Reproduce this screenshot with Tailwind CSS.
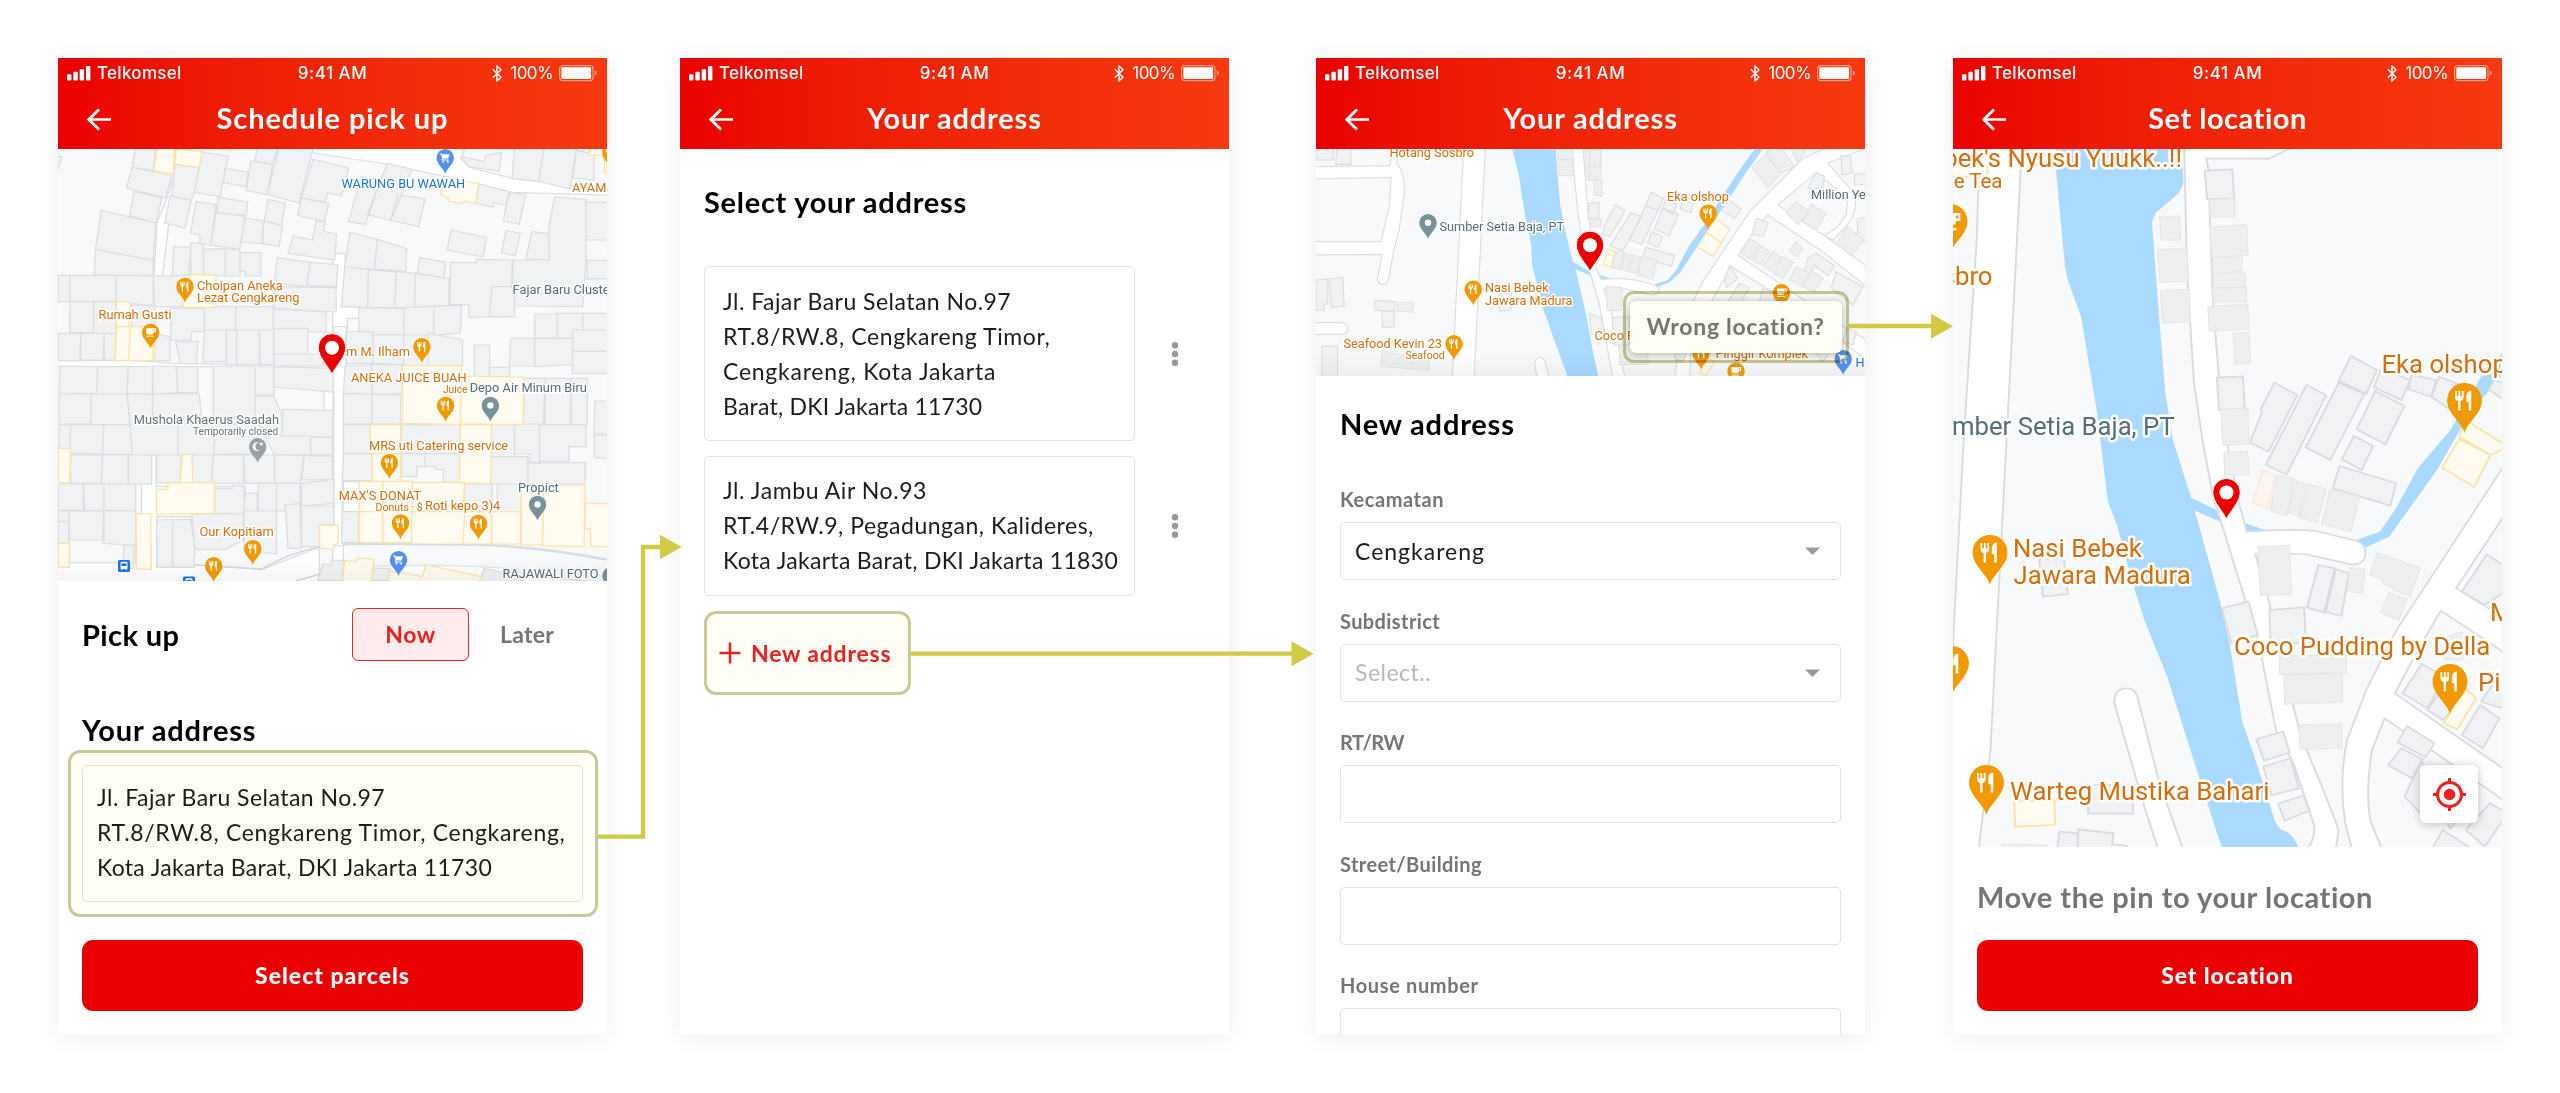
<!DOCTYPE html>
<html lang="en">
<head>
<meta charset="utf-8">
<title>Pick up address flow</title>
<script src="https://cdn.jsdelivr.net/npm/@tailwindcss/browser@4"></script>
</head>
<body class="bg-white">
<!-- Shared icons -->
<svg class="absolute h-0 w-0" aria-hidden="true">
  <defs>
    <path id="drop" d="M0 0C-.9-5-8.7-9.600-8.700-16.300A8.700 8.700 0 0 1 8.700-16.300C8.700-9.600 .9-5 0 0Z"/>
    <g id="food"><use href="#drop" fill="#f29900"/><path d="M-4.300-21v3.200M-2.600-21v3.200M-.9-21v3.200" stroke="#fff" stroke-width=".9" fill="none"/><path d="M-4.750-18.400H-.45Q-.45-16.200-2-16V-11.300H-3.200V-16Q-4.750-16.200-4.750-18.400ZM3.400-21.200V-11.300H2.100V-15.400H.9V-18.500Q1.200-21 3.400-21.200Z" fill="#fff"/></g>
    <g id="cafe"><use href="#drop" fill="#f29900"/><path d="M-4.500-20.500H5.200V-16.500H3Q2.800-14.300 1-14.300H-2.500Q-4.500-14.300-4.500-16.500ZM3-19.300V-17.700H4.100V-19.300ZM-4.500-13H3.200V-11.900H-4.500Z" fill="#fff" fill-rule="evenodd"/></g>
    <g id="shop"><use href="#drop" fill="#5491f5"/><path d="M-5.500-20.800H-3.600L-3.200-19.800H4.600L2.900-15.600H-1.800L-2.400-14.600H3.500V-13.500H-3.400Q-4.300-14.200-2.900-15.900L-4.400-19.700H-5.500Z" fill="#fff"/><circle cx="-2" cy="-12.200" r="1" fill="#fff"/><circle cx="2.700" cy="-12.200" r="1" fill="#fff"/></g>
    <g id="place"><use href="#drop" fill="#78909c"/><circle cy="-16.300" r="3.200" fill="#fff"/></g>
    <g id="mosque"><use href="#drop" fill="#9aa0a6"/><path d="M1.600-12.800A4.300 4.300 0 1 1 1.300-20.200A3.600 3.600 0 1 0 1.600-12.800Z" fill="#fff"/><path d="M3.500-21l.6 1.300 1.400.1-1 1 .3 1.400-1.300-.7-1.200.7.200-1.400-1-1 1.400-.1Z" fill="#fff"/></g>
    <g id="bus"><rect width="12" height="12" rx="1.600" fill="#1a73e8"/><path d="M2.500 3Q2.500 1.800 4 1.800H8Q9.500 1.800 9.500 3V9H8.700V10.300H7.500V9H4.500V10.300H3.300V9H2.500Z" fill="#fff"/><path d="M3.500 3.400H8.500V6H3.500Z" fill="#1a73e8"/></g>
    <g id="pin"><path d="M0 .3C-2.600-6.500-13.800-16.500-13.800-26.600A13.800 13.800 0 0 1 13.800-26.600C13.800-16.500 2.600-6.500 0 .3Z" fill="#ea0000" stroke="#fff" stroke-width="1"/><circle cy="-26.300" r="7" fill="#fff"/></g>
    <g id="bars" fill="#fff"><rect y="8.200" width="4.400" height="6.300" rx="1"/><rect x="6.400" y="5.800" width="4.400" height="8.700" rx="1"/><rect x="12.700" y="3.200" width="4.400" height="11.300" rx="1"/><rect x="19" width="4.400" height="14.500" rx="1"/></g>
    <path id="bluetooth" d="M.8 4.300L9 12.200L5 16V1L9 4.800L.8 12.700" fill="none" stroke="#fff" stroke-width="1.400"/>
    <g id="battery"><rect x=".6" y=".6" width="33.400" height="15" rx="3" fill="none" stroke="#fff" stroke-opacity=".5" stroke-width="1.200"/><rect x="2.300" y="2.300" width="29.800" height="11.600" rx="1.200" fill="#fff"/><path d="M35.700 5.500Q38 6.300 38 8.100Q38 9.900 35.700 10.700Z" fill="#fff" fill-opacity=".5"/></g>
    <path id="back" d="M12 1.500L1.800 11.500L12 21.500M1.800 11.500H24" fill="none" stroke="#fff" stroke-width="2.700"/>
  </defs>
</svg>

<main class="relative flex h-[1093px] w-[2560px] overflow-hidden pt-[58px] pl-[58px] font-['Lato',sans-serif]">

  <!-- Screen 1: schedule pick up -->
  <article class="flex h-[976px] w-[549px] flex-col bg-white shadow-[0_3px_24px_rgba(0,0,0,0.07)]">
    <header class="h-[91px] shrink-0 bg-gradient-to-r from-[#ea0000] to-[#f6390f] text-white">
      <div class="grid h-[31px] grid-cols-[1fr_auto_1fr] items-center pr-[9px] pl-[9px] font-['Inter',sans-serif] text-[17px]">
        <div class="flex items-center gap-[6px] font-medium tracking-[0.29px]"><svg class="h-[15px] w-[24px]"><use href="#bars"/></svg>Telkomsel</div>
        <div class="font-medium tracking-[0.55px]">9:41 AM</div>
        <div class="flex items-center justify-end tracking-[-0.6px]"><svg class="mr-[8px] h-[17px] w-[10px]"><use href="#bluetooth"/></svg>100%<svg class="ml-[6px] h-[17px] w-[39px]"><use href="#battery"/></svg></div>
      </div>
      <div class="grid h-[60px] grid-cols-[1fr_auto_1fr] items-center pl-[29px] pr-[29px]">
        <svg class="h-[23px] w-[26px]"><use href="#back"/></svg>
        <h1 class="pb-[3px] text-[29px] font-bold tracking-[0.9px]">Schedule pick up</h1>
      </div>
    </header>
    <div class="relative h-[432px] shrink-0 overflow-hidden bg-[#f8f9fb]">
      <svg class="h-[432px] w-[549px] font-['Roboto',sans-serif]" viewBox="0 0 549 432">
        <g transform="translate(-18 -109) scale(.38265 .33333)" fill="#f1f2f4" stroke="#dcdee2" stroke-width="3.500">
          <path fill="#fff" d="M700 320H1112L1100 356L1122 382L1236 416L1500 452V466L1230 457L1060 410L905 372L700 336Z"/>
          <path fill="#fff" d="M352 405L320 708H298L306 548L333 470Z"/>
          <path fill="#fff" d="M765 1700V650Q785 630 798 645V800H835V835H803V900L790 1700Z"/>
          <path d="M250 320L302 326L297 392L241 382ZM241 382L345 405L328 474L226 444ZM246 455L318 474L303 549L234 527ZM160 511L303 549L296 661L145 628ZM145 628L296 661V706H142ZM40 346L58 350L46 388V340Z"/>
          <path d="M424 336L492 348L471 470L403 457ZM353 374L416 383L403 457L395 482L344 467ZM340 467L395 482L379 564L326 549ZM568 325H622L608 372L561 363ZM551 363L608 374L594 464L539 452ZM484 385L544 396L538 440L479 428ZM624 325H714L677 489L594 464Z"/>
          <path d="M714 358L806 384L797 435L787 467L752 458L744 486L683 474ZM683 474L754 490L744 544L673 526ZM466 472L543 486L539 527L461 518ZM408 485L460 493L446 615L418 611V585L393 580ZM460 516L536 530L522 628L446 615ZM536 534L585 543L579 611L526 606ZM585 543L634 558L625 620L581 611ZM596 478L641 490L631 556L586 543Z"/>
          <path d="M722 540L746 548L741 574L775 583L770 660L648 640L662 588L712 600ZM349 620L393 622L395 708H346ZM395 608L427 612V703H389ZM427 628L485 626L484 708L427 703ZM485 626L522 630L523 708H484ZM523 637L577 638V708H536V694H523Z"/>
          <path d="M620 653L706 667L697 740L613 730ZM706 667L778 674L775 740L697 737ZM613 740L774 743V816L610 805ZM810 577L881 598L875 688L796 681ZM881 598L958 625L956 694L875 688ZM796 681L858 688L856 803L788 799ZM858 688L931 696L926 803H856ZM931 694L982 700L978 803H926ZM982 700L1069 716V796L978 803Z"/>
          <path d="M908 370L972 388L917 541L855 524ZM840 410L890 420L850 553L806 545ZM972 470L1006 477L990 560L917 541L934 465ZM992 653L1060 667L1056 713L986 699ZM1074 570L1167 592L1158 651L1064 630ZM1218 571L1255 580L1243 647L1206 638ZM1225 455L1269 466L1252 553L1211 543ZM1147 432L1229 455L1219 496L1187 488L1183 501L1138 490ZM1285 575L1344 583L1331 662L1270 657Z"/>
          <path d="M1345 471L1427 478V662L1418 800L1234 798L1236 660H1331L1330 560ZM1427 487H1500V600H1427ZM1240 325H1317L1303 424L1234 415ZM1317 325H1402L1385 447L1303 424ZM1402 330L1448 345V420L1392 413ZM1104 350L1120 380L1200 393L1206 337L1165 346L1160 365ZM1430 661H1500V715L1430 718ZM1073 667L1140 668V658L1235 660L1229 830L1122 832L1120 794H1071Z"/>
          <path d="M48 706H78V785H48ZM78 706H198V785H78ZM198 706L296 708V795H198ZM296 708H346L395 703L370 800H300ZM78 785H140V878H78ZM140 785H198V900H140ZM240 790L300 800V900H240ZM342 805H430V875L397 874L395 900H342ZM430 800H511V875H430ZM511 800H610V880H511ZM610 807L748 816V876H610ZM833 803L952 806L950 887L833 885ZM952 803L1030 799L1028 887H950ZM1030 799L1102 796L1099 878L1028 887ZM1293 822H1352V894H1293ZM1352 820H1418V894H1352ZM1418 820H1500V900H1418ZM1180 740H1240V830H1175Z"/>
        </g>
        <g transform="translate(-18 181) scale(.38265 .33333)" fill="#f1f2f4" stroke="#dcdee2" stroke-width="3.500">
          <path fill="#fff" d="M40 92H262L345 100L610 104V110H40ZM290 375H303V470H536V486H456V560H305V712L420 705L580 718L730 652V780H40V698H250V550H265V462H290Z"/>
          <path fill="#fff" d="M790 638L1150 642Q1300 648 1500 690V780H660L730 752L742 735L860 710Q1000 700 1210 714L1300 740L1500 760V690Q1300 648 1150 642L790 638V455H835V640L730 655L735 585H768V185L742 183V240L766 245V-10H800V100Z"/>
          <path d="M48 10H106V92H48ZM106 10H168L165 90H105ZM168 10H198V90H168ZM295 10L340 20V92H295ZM355 35H413L408 102L366 100ZM430 0H487V95H425ZM487 0H514V104H487ZM514 0H573V104H514ZM573 0H611V104H575ZM611 -5H700V72H611ZM611 72H740V108H611ZM800 5H870V100H800ZM870 15H950V104L870 100ZM950 15H1015V107H950ZM1015 10L1104 30V107H1015ZM1135 45H1175V140H1135ZM1230 25H1293V108H1227ZM1293 25H1392V104L1293 110ZM1392 64H1500V130H1392ZM1392 0H1500V64H1392Z"/>
          <path d="M52 108L150 110L148 190L50 192ZM150 110H230L228 192H148ZM230 110L294 108L295 192L228 190ZM294 108H356L360 188L294 194ZM356 110H412V188H360ZM50 192H133V282H50ZM133 192H228L235 284H133ZM228 190L294 194V282H235ZM294 192H416L424 284H294ZM453 108H562V260L453 265ZM562 108H611V195H562ZM611 110L768 115L765 186L611 171ZM634 238L765 241L764 322L633 318ZM424 260H562V284H424ZM562 198H611L634 260L633 318L562 290Z"/>
          <path d="M50 284H80L78 375H50ZM80 284H167L163 372L78 370ZM167 284H235L240 372L163 373ZM235 284H361V375H240ZM361 282H460L453 375H361ZM460 284H573L568 372L453 373ZM573 290L633 318H707V378L613 374ZM707 322H764V378H707ZM80 375H163L160 460H80ZM163 375H231V462H160ZM231 375H292V462H231ZM305 375H369L366 458H305ZM399 375H453L448 460H397ZM453 375H532V460H448ZM532 375H613V460H536ZM613 375H690L680 460H613ZM690 375H764V448L684 450Z"/>
          <path d="M48 462H113V540H48ZM113 462H167V542H117ZM167 462H250V542H167ZM48 543H75V575H48ZM75 543H167V630H77ZM167 543H250V647L163 640ZM220 645H245V715H216ZM48 575H75V640H48ZM456 475H502V467H534V552L456 550ZM536 490H568V543H533ZM570 460H618V543H570ZM305 570L347 568V712H307ZM347 570L394 568L405 657L402 712H347ZM397 552H531V630L484 658H404ZM533 543L618 543V672L533 660ZM641 525L680 520L683 655L648 655ZM618 460H680V520L640 525V543H618ZM683 460L768 448V520L683 528ZM683 528H768V585L740 583L732 650H683Z"/>
          <path d="M797 108L867 104V192L793 190ZM867 104H947V194H867ZM793 192H867V282H793ZM867 192H942V282H867ZM793 284H863V371H793ZM793 371H868V452H790ZM945 284H1098V371H943ZM945 371H1006V410H985V440H945ZM1006 371H1098V460L1054 455V418H1033V410H1006ZM1180 282H1240V380H1178ZM1240 282H1305V400L1281 398V372H1240ZM1305 284H1427V350H1382V393H1305ZM1178 380H1275V462H1178ZM1275 398H1425V462H1275ZM1265 145H1320V282H1263ZM1320 145H1388V284H1316ZM1388 145H1430V284H1386ZM1450 213H1500V313H1448ZM1448 315H1500V384H1448ZM1107 462H1182V542H1110ZM1195 462H1260V545H1195ZM790 545H833V638H788ZM1175 112H1227V140H1175Z"/>
          <path d="M725 752L740 702L762 705V690L795 692L790 752ZM870 715H915V752H862ZM1160 715L1260 740V760H1150Z"/>
        </g>
        <g fill="#fffbf1" stroke="#fde3a7" stroke-width="3.500">
          <path transform="translate(-18 -109) scale(.38265 .33333)" d="M306 325H352L348 404L297 392ZM356 325L424 336L416 383L352 373ZM460 325L498 333 500 325ZM1056 408L1147 432L1138 490L1108 484L1104 491L1067 484V472L1047 465ZM391 703L460 706V802H372L374 760H391ZM200 784L235 786L232 868L270 870L300 900V960H196ZM1436 326H1482V400H1475V345L1436 346Z"/>
          <path transform="translate(-18 181) scale(.38265 .33333)" d="M200 -10H236L232 92H196ZM236 -10H298L294 92H232ZM947 106L1102 108L1099 284L947 280ZM1102 138L1265 142L1263 284H1099ZM863 284H943V371H863ZM868 371H943V454H868ZM1098 282H1180L1178 462L1096 458ZM834 454H896V545H834ZM896 454H973V545H896ZM973 457H1110L1104 545H973ZM834 545H896V638H834ZM896 545H971V638H896ZM971 545H1110L1105 642H971ZM1110 545H1180V642H1105ZM1180 545H1258V642H1180ZM1258 468L1317 462L1313 645L1256 645ZM1317 465H1425L1422 650L1313 647ZM1425 520H1500V650H1440L1438 596H1424ZM304 478H334V458H456V550L304 553ZM372 373H397L399 458H366ZM251 551H289L291 718L252 716ZM48 355H80L78 458H48ZM48 640H77V712H48ZM731 585L780 587L779 642L768 644V658L731 654ZM796 692L827 695L830 683L873 688L866 760H790ZM914 722L1000 740L1008 704L1155 740L1150 760H908Z"/>
        </g>
        <path fill="none" stroke="#d5d8df" stroke-width="1.500" d="M137 416L204 420Q230 404 262 398M284 395L420 396Q480 398 549 411M238 432L262 425"/>
        <g class="fill-[#d56e0c] text-[12.8px]" stroke="#fff" stroke-width="3" stroke-linejoin="round" paint-order="stroke">
          <text x="283.500" y="39" class="fill-[#1a73e8]">WARUNG BU WAWAH</text>
          <text x="514" y="42.700">AYAM GEPREK</text>
          <text x="139" y="140.500">Choipan Aneka</text><text x="139" y="153">Lezat Cengkareng</text>
          <text x="40.500" y="170.300">Rumah Gusti</text>
          <text x="454.600" y="145" class="fill-[#546e7a]">Fajar Baru Cluster</text>
          <text x="288" y="207.300">m M. Ilham</text>
          <text x="293" y="233.300">ANEKA JUICE BUAH</text><text x="385" y="243.700" class="text-[10.200px]">Juice</text>
          <text x="411.700" y="243.300" class="fill-[#546e7a]">Depo Air Minum Biru</text>
          <text x="75.800" y="275" class="fill-[#6a7378]">Mushola Khaerus Saadah</text><text x="135" y="285.800" class="fill-[#6a7378] text-[10.100px]">Temporarily closed</text>
          <text x="311" y="300.700">MRS uti Catering service</text>
          <text x="280.800" y="350.700">MAX'S DONAT</text><text x="317.600" y="361.500" class="text-[10.500px]">Donuts · $</text><text x="367" y="361.300">Roti kepo 3)4</text>
          <text x="460" y="342.700" class="fill-[#546e7a]">Propict</text>
          <text x="141.500" y="387">Our Kopitiam</text>
          <text x="444.600" y="429.300" class="fill-[#546e7a]">RAJAWALI FOTO</text>
        </g>
        <use href="#shop" x="387.200" y="25"/><use href="#food" x="553" y="20"/><use href="#food" x="127" y="153.700"/><use href="#cafe" x="92.600" y="199.700"/>
        <use href="#food" x="363.900" y="214"/><use href="#food" x="387.600" y="272.700"/><use href="#place" x="432.400" y="272.700"/><use href="#mosque" x="199.700" y="314"/>
        <use href="#food" x="331.400" y="330"/><use href="#food" x="342.500" y="390.300"/><use href="#food" x="420.500" y="390.700"/><use href="#place" x="479.500" y="371.700"/>
        <use href="#food" x="194.800" y="416"/><use href="#food" x="155.700" y="433"/><use href="#shop" x="340.500" y="427"/><use href="#place" x="553" y="443"/>
        <use href="#bus" x="60" y="411"/><use href="#bus" x="125" y="427.500"/>
        <use href="#pin" x="274" y="225"/>
      </svg>
      <div class="absolute inset-x-0 bottom-0 h-6 bg-gradient-to-t from-black/4 to-transparent"></div>
    </div>
    <section class="px-[24px] pt-[27px]">
      <div class="flex h-[53px] items-center">
        <h2 class="flex-1 text-[29px] font-bold tracking-[0.4px] text-black">Pick up</h2>
        <span class="flex h-[53px] w-[117px] items-center justify-center rounded-md border border-[#ee2222] bg-[#ffebeb] text-[23px] font-bold tracking-[0.500px] text-[#e8201f]">Now</span>
        <span class="flex h-[53px] w-[114px] items-center justify-center pl-[2px] text-[23px] font-bold tracking-[0.240px] text-[#757575]">Later</span>
      </div>
      <h2 class="mt-[49px] h-[40px] text-[29px] leading-[40px] font-bold tracking-[0.8px] text-black">Your address</h2>
      <div class="relative mt-[15px] h-[137px] rounded-[5px] border border-[#e2e2e2] pt-[14px] pl-[14px] text-[23px] leading-[35.200px] whitespace-nowrap text-[#1c1c1c]">
        <p class="tracking-[0.470px]">Jl. Fajar Baru Selatan No.97</p>
        <p class="tracking-[0.670px]">RT.8/RW.8, Cengkareng Timor, Cengkareng,</p>
        <p class="tracking-[0.310px]">Kota Jakarta Barat, DKI Jakarta 11730</p>
        <div class="absolute -top-[16px] -right-[16px] -bottom-[16px] -left-[15px] rounded-[12px] border-3 border-[#cac89a] bg-[#fffff6] mix-blend-multiply"></div>
      </div>
      <button class="mt-[38px] h-[71px] w-full rounded-[11px] bg-[#ea0000] text-[23px] font-black tracking-[1px] text-white">Select parcels</button>
    </section>
  </article>

  <!-- Screen 2: address list -->
  <article class="ml-[73px] flex h-[976px] w-[549px] flex-col bg-white shadow-[0_3px_24px_rgba(0,0,0,0.07)]">
    <header class="h-[91px] shrink-0 bg-gradient-to-r from-[#ea0000] to-[#f6390f] text-white">
      <div class="grid h-[31px] grid-cols-[1fr_auto_1fr] items-center pr-[9px] pl-[9px] font-['Inter',sans-serif] text-[17px]">
        <div class="flex items-center gap-[6px] font-medium tracking-[0.29px]"><svg class="h-[15px] w-[24px]"><use href="#bars"/></svg>Telkomsel</div>
        <div class="font-medium tracking-[0.55px]">9:41 AM</div>
        <div class="flex items-center justify-end tracking-[-0.6px]"><svg class="mr-[8px] h-[17px] w-[10px]"><use href="#bluetooth"/></svg>100%<svg class="ml-[6px] h-[17px] w-[39px]"><use href="#battery"/></svg></div>
      </div>
      <div class="grid h-[60px] grid-cols-[1fr_auto_1fr] items-center pl-[29px] pr-[29px]">
        <svg class="h-[23px] w-[26px]"><use href="#back"/></svg>
        <h1 class="pb-[3px] text-[29px] font-bold tracking-[0.8px]">Your address</h1>
      </div>
    </header>
    <section class="px-[24px] pt-[33px]">
      <h2 class="h-[40px] text-[29px] leading-[40px] font-bold tracking-[0.720px] text-black">Select your address</h2>
      <div class="mt-[44px] grid grid-cols-[431px_1fr] items-center gap-y-[15px] text-[23px] leading-[35.100px] whitespace-nowrap text-[#1c1c1c]">
        <div class="h-[175px] rounded-[5px] border border-[#e2e2e2] pt-[17px] pl-[18px]">
          <p class="tracking-[0.470px]">Jl. Fajar Baru Selatan No.97</p>
          <p class="tracking-[0.600px]">RT.8/RW.8, Cengkareng Timor,</p>
          <p class="tracking-[0.750px]">Cengkareng, Kota Jakarta</p>
          <p class="tracking-[0.230px]">Barat, DKI Jakarta 11730</p>
        </div>
        <svg class="ml-[36px] h-[26px] w-[8px] fill-[#999]" viewBox="0 0 8 26"><circle cx="4" cy="4.300" r="3.200"/><circle cx="4" cy="13" r="3.200"/><circle cx="4" cy="21.700" r="3.200"/></svg>
        <div class="h-[140px] rounded-[5px] border border-[#e2e2e2] pt-[16px] pl-[18px]">
          <p class="tracking-[0.570px]">Jl. Jambu Air No.93</p>
          <p class="tracking-[0.510px]">RT.4/RW.9, Pegadungan, Kalideres,</p>
          <p class="tracking-[0.310px]">Kota Jakarta Barat, DKI Jakarta 11830</p>
        </div>
        <svg class="ml-[36px] h-[26px] w-[8px] fill-[#999]" viewBox="0 0 8 26"><circle cx="4" cy="4.300" r="3.200"/><circle cx="4" cy="13" r="3.200"/><circle cx="4" cy="21.700" r="3.200"/></svg>
      </div>
      <div class="mt-[15px] flex h-[84px] w-[207px] items-center rounded-[12px] border-3 border-[#cac89a] bg-[#fffff6] pl-[12px] text-[23px] font-bold tracking-[0.800px] text-[#e8201f]">
        <svg class="mr-[10px] h-[22px] w-[22px]" viewBox="0 0 22 22"><path d="M11 .5V21.500M.5 11H21.500" stroke="currentColor" stroke-width="2.500"/></svg>New address
      </div>
    </section>
  </article>

  <!-- Screen 3: new address form -->
  <article class="ml-[87px] flex h-[976px] w-[549px] flex-col overflow-hidden bg-white shadow-[0_3px_24px_rgba(0,0,0,0.07)]">
    <header class="h-[91px] shrink-0 bg-gradient-to-r from-[#ea0000] to-[#f6390f] text-white">
      <div class="grid h-[31px] grid-cols-[1fr_auto_1fr] items-center pr-[9px] pl-[9px] font-['Inter',sans-serif] text-[17px]">
        <div class="flex items-center gap-[6px] font-medium tracking-[0.29px]"><svg class="h-[15px] w-[24px]"><use href="#bars"/></svg>Telkomsel</div>
        <div class="font-medium tracking-[0.55px]">9:41 AM</div>
        <div class="flex items-center justify-end tracking-[-0.6px]"><svg class="mr-[8px] h-[17px] w-[10px]"><use href="#bluetooth"/></svg>100%<svg class="ml-[6px] h-[17px] w-[39px]"><use href="#battery"/></svg></div>
      </div>
      <div class="grid h-[60px] grid-cols-[1fr_auto_1fr] items-center pl-[29px] pr-[29px]">
        <svg class="h-[23px] w-[26px]"><use href="#back"/></svg>
        <h1 class="pb-[3px] text-[29px] font-bold tracking-[0.8px]">Your address</h1>
      </div>
    </header>
    <div class="relative h-[227px] shrink-0 overflow-hidden bg-[#f8f9fb]">
      <svg class="h-[227px] w-[549px] font-['Roboto',sans-serif]" viewBox="-.5 0 549 227">
        <g transform="translate(-7 -4) scale(.33333)" fill="#f1f2f4" stroke="#dcdee2" stroke-width="3.500">
          <path fill="#aadaff" stroke="none" d="M605 0H738L745 100L752 180L770 270L790 350L845 382V392L798 373L830 510L850 620L868 700H776L700 490L668 360L665 300L645 200L627 85Z"/>
          <path fill="#fff" d="M463 0L428 700H494L528 0Z"/>
          <path fill="#fff" d="M0 65L240 62L250 20H268L262 55Q285 80 285 140L268 260L252 320L238 400Q235 420 218 418Q202 415 205 395L218 328L0 330V290L215 290L240 180L245 97L0 102Z"/>
          <path fill="#fff" d="M0 533H95Q115 535 115 550Q115 568 95 568H0ZM683 700L675 655Q680 635 695 637Q705 640 708 655L720 700Z"/>
          <path d="M20 0H72V45H20ZM82 0H124V58H79ZM20 405L55 402V476L44 478V495H20ZM60 402L100 397L104 484L65 488ZM197 466L256 470L254 500L194 495ZM217 498H254V546L219 548ZM37 604H84V700H38ZM568 445H605V495L570 499ZM20 10V48"/>
          <path fill="#eef0f0" stroke="#e4e6e6" d="M263 471L312 474L310 502L261 498ZM218 618L360 644L358 676L214 664ZM745 -10H800V45H745ZM745 42H790V92H748ZM815 60H870V105H818ZM812 -10H875V60H815Z"/>
        </g>
        <g transform="translate(273 -4) scale(.33333)" fill="#f1f2f4" stroke="#dcdee2" stroke-width="3.500">
          <path fill="#aadaff" stroke="none" d="M30 390L60 400L35 405ZM195 418L235 405L260 375L300 300L340 245L440 90L500 5H525L465 90L360 250L320 310L270 385L240 412L205 426Z"/>
          <path fill="#fff" d="M-52 0L-45 100L-35 200L-20 300L0 375L30 480L70 700H107L65 500L42 433L110 432L185 450Q210 450 208 432Q205 420 140 405L90 400L35 403L20 370L-5 200L-20 0Z"/>
          <path fill="#fff" d="M730 0L640 40L590 90L480 200L340 410L280 530L255 700H300L305 600L325 540L425 365L580 460L840 650V590L740 530L445 330L500 250L535 210L700 320L840 432V370L705 272L565 180L680 83L775 160L770 210L745 245L705 272L730 285L760 255Q800 215 798 170L790 140L715 55L840 5V-10Z"/>
          <path d="M77 180L107 196L93 222L60 275L38 266L54 222ZM125 202L155 215L100 318L62 302ZM185 142L222 160L206 197L168 183ZM168 183L206 197L157 298L120 285ZM219 190L266 208L240 272L195 252ZM188 260L219 275L205 308L174 293ZM168 307L255 331L247 364L160 341ZM228 165L262 178L250 208L220 190ZM280 165L310 175L305 203L272 192ZM418 166L455 192L435 221L395 194ZM502 220L536 234L520 275L487 268ZM0 175L28 172V220L-5 222Z"/>
          <path d="M680 82L705 95L700 130L655 130ZM755 32L783 33L788 84L757 90ZM795 88L840 85V118L795 120ZM803 222L840 215V290H806ZM740 380L820 425L790 480L725 430ZM655 338L680 325L735 362L715 392L675 360L660 388L645 380ZM420 362L445 400L412 428L405 405ZM450 415L480 428L450 480L415 470ZM500 500L540 520L560 440L520 430ZM0 505L35 520L45 560L5 570ZM68 518L120 515V600H75ZM262 592L300 600L280 650L255 640ZM690 580L730 610L700 650L665 610ZM770 550L800 560L790 600L760 590Z"/>
          <path fill="#eef0f0" stroke="#e2e5e5" d="M530 28L575 85L535 127L488 66ZM570 0L615 65L575 85L530 20ZM600 0L650 15L625 55ZM0 15H32V65H0ZM0 65H35L33 104H0ZM15 104L37 106L38 154L14 150ZM50 425L98 428L96 496H52ZM620 172L660 200L625 238L589 203ZM665 178L710 205L680 255L640 232ZM775 245L825 285L785 332L741 297ZM480 280L510 300L485 343L455 325ZM515 302L540 320L512 360L490 345ZM550 318L575 338L545 378L520 362ZM580 335L612 352L580 402L552 385ZM620 290L640 312L620 335L600 318ZM620 365L660 385L640 425L600 405ZM665 375L700 400L675 440L640 425ZM155 335L202 345L190 402L145 390ZM130 330L155 338L142 385L118 380ZM105 325L125 330L112 378L95 372ZM80 318L103 322L92 372L68 368ZM0 222H35V245H2ZM90 600H175V658H90Z"/>
          <path fill="#fffbf1" stroke="#fde3a7" d="M380 222L421 252L395 294L350 262ZM352 262L395 294L372 334L323 306ZM355 640L375 650L350 692L330 684ZM55 312L76 318L66 368L42 358Z"/>
        </g>
        <g class="fill-[#d56e0c] text-[12.7px]" stroke="#fff" stroke-width="3" stroke-linejoin="round" paint-order="stroke">
          <text x="73" y="8">Hotang Sosbro</text>
          <text x="123" y="82" class="fill-[#546e7a]">Sumber Setia Baja, PT</text>
          <text x="168.500" y="143">Nasi Bebek</text><text x="168.500" y="155.500">Jawara Madura</text>
          <text x="27" y="199">Seafood Kevin 23</text><text x="89" y="209.500" class="text-[10.500px]">Seafood</text>
          <text x="350.500" y="51.500">Eka olshop</text>
          <text x="494.500" y="49.500" class="fill-[#546e7a]">Million Years</text>
          <text x="278" y="191">Coco Pudding</text>
          <text x="399" y="209">Pinggir Komplek</text>
          <text x="539" y="218" class="fill-[#1a73e8]">Hotel</text>
        </g>
        <use href="#place" x="111.500" y="90"/><use href="#food" x="156.700" y="156.500"/><use href="#food" x="137.500" y="211"/><use href="#food" x="391.700" y="80.500"/>
        <use href="#cafe" x="465" y="160"/><use href="#food" x="384.500" y="220.500"/><use href="#cafe" x="419.500" y="238.500"/><use href="#shop" x="526.700" y="226"/>
        <use href="#pin" x="273.500" y="122.500"/>
      </svg>
      <div class="absolute inset-x-0 bottom-0 h-6 bg-gradient-to-t from-black/4 to-transparent"></div>
      <div class="absolute top-[142px] left-[307px] flex h-[72px] w-[226px] items-center justify-center">
        <span class="flex h-[52px] w-[212px] items-center justify-center rounded-md bg-white pr-[1px] pb-[2px] text-[23px] font-bold tracking-[0.700px] whitespace-nowrap text-[#757575] shadow-[0_1px_8px_rgba(0,0,0,0.3)]">Wrong location?</span>
        <div class="absolute inset-0 rounded-[11px] border-3 border-[#cac89a] bg-[#fffff0]/60 mix-blend-multiply"></div>
      </div>
    </div>
    <section class="px-[24px] pt-[28px]">
      <h2 class="h-[40px] text-[29px] leading-[40px] font-bold tracking-[0.800px] text-black">New address</h2>
      <div class="mt-[43px] flex flex-col gap-[28px] text-[20px] font-bold text-[#757575]">
        <label class="block h-[93.500px]"><span class="block h-[24px] leading-[24px] tracking-[0.550px]">Kecamatan</span>
          <span class="mt-[11px] flex h-[58px] items-center justify-between rounded-[5px] border border-[#e2e2e2] pr-[20px] pl-[14px] text-[23px] font-normal tracking-[1px] text-[#1c1c1c]">Cengkareng<svg class="h-[8px] w-[15px]" viewBox="0 0 15 8"><path d="M0 .5H15L7.500 8Z" fill="#999"/></svg></span></label>
        <label class="block h-[93.500px]"><span class="block h-[24px] leading-[24px] tracking-[0.400px]">Subdistrict</span>
          <span class="mt-[11px] flex h-[58px] items-center justify-between rounded-[5px] border border-[#e2e2e2] pr-[20px] pl-[14px] text-[23px] font-normal tracking-[0.470px] text-[#b8b8b8]">Select..<svg class="h-[8px] w-[15px]" viewBox="0 0 15 8"><path d="M0 .5H15L7.500 8Z" fill="#999"/></svg></span></label>
        <label class="block h-[93.500px]"><span class="block h-[24px] leading-[24px] tracking-[-0.400px]">RT/RW</span>
          <span class="mt-[11px] block h-[58px] rounded-[5px] border border-[#e2e2e2]"></span></label>
        <label class="block h-[93.500px]"><span class="block h-[24px] leading-[24px] tracking-[0.420px]">Street/Building</span>
          <span class="mt-[11px] block h-[58px] rounded-[5px] border border-[#e2e2e2]"></span></label>
        <label class="block h-[93.500px]"><span class="block h-[24px] leading-[24px] tracking-[0.630px]">House number</span>
          <span class="mt-[11px] block h-[58px] rounded-[5px] border border-[#e2e2e2]"></span></label>
      </div>
    </section>
  </article>

  <!-- Screen 4: set location -->
  <article class="ml-[88px] flex h-[976px] w-[549px] flex-col bg-white shadow-[0_3px_24px_rgba(0,0,0,0.07)]">
    <header class="h-[91px] shrink-0 bg-gradient-to-r from-[#ea0000] to-[#f6390f] text-white">
      <div class="grid h-[31px] grid-cols-[1fr_auto_1fr] items-center pr-[9px] pl-[9px] font-['Inter',sans-serif] text-[17px]">
        <div class="flex items-center gap-[6px] font-medium tracking-[0.29px]"><svg class="h-[15px] w-[24px]"><use href="#bars"/></svg>Telkomsel</div>
        <div class="font-medium tracking-[0.55px]">9:41 AM</div>
        <div class="flex items-center justify-end tracking-[-0.6px]"><svg class="mr-[8px] h-[17px] w-[10px]"><use href="#bluetooth"/></svg>100%<svg class="ml-[6px] h-[17px] w-[39px]"><use href="#battery"/></svg></div>
      </div>
      <div class="grid h-[60px] grid-cols-[1fr_auto_1fr] items-center pl-[29px] pr-[29px]">
        <svg class="h-[23px] w-[26px]"><use href="#back"/></svg>
        <h1 class="pb-[3px] text-[29px] font-bold tracking-[0.5px]">Set location</h1>
      </div>
    </header>
    <div class="relative h-[698px] shrink-0 overflow-hidden bg-[#f8f9fb]">
      <svg class="h-[698px] w-[549px] font-['Roboto',sans-serif]" viewBox="0 0 549 698">
        <g transform="translate(-23 -109) scale(.38265 .33333)" fill="#f1f2f4" stroke="#d9dbe0" stroke-width="5">
          <path fill="#aadaff" stroke="none" d="M328 320H658L662 430L650 460L590 518L580 545L600 850L615 1060L635 1200L682 1373L757 1415L765 1448L692 1412L757 1680L783 1810L817 2050L845 2140L890 2300Q905 2370 925 2372Q945 2375 965 2425H763L700 2200L620 1910L560 1740L530 1630L490 1460L465 1385L445 1200L437 1120L415 970L395 830L360 720L353 680L330 400Z"/>
          <path fill="#aadaff" stroke="none" d="M825 1450L875 1470L830 1475ZM1110 1502L1175 1475L1215 1410L1275 1285L1360 1170L1440 1010L1500 935V1000L1440 1080L1385 1170L1325 1290L1275 1370L1200 1490L1135 1524Z"/>
          <path fill="#fff" d="M130 320L122 600L88 1200L62 1770L40 2430H127L158 2130L200 1200L240 320Z"/>
          <path fill="#fff" d="M597 2430L560 2300L482 1990Q480 1945 515 1945Q540 1945 545 1985L600 2230L662 2430Z"/>
          <path fill="#fff" d="M664 310L672 700L680 850L690 1030L712 1200L740 1370L770 1480L825 1685L860 1810L880 1930L905 2075L950 2170L1005 2360Q1005 2400 985 2430H1060L1068 2370L1035 2270L970 2090L920 1870L885 1680L850 1542L980 1542L1100 1573Q1138 1575 1138 1540Q1138 1510 1115 1503L1010 1473Q960 1465 828 1475L805 1380L775 1200L755 1010L740 800L732 560L728 390L722 356H885L960 315Z"/>
          <path fill="#fff" d="M1510 1260L1225 1760L1210 1790L1140 1950L1090 2100Q1068 2220 1085 2350L1104 2430H1182L1150 2340Q1138 2250 1155 2130L1188 2035L1310 2130L1510 2290V2195L1390 2100L1215 1960L1280 1820L1335 1712L1510 1845V1740L1375 1645L1510 1410Z"/>
          <path d="M718 392L790 388L795 475L724 478ZM750 1013L818 1009L822 1105L755 1110ZM900 1028L960 1065L885 1235L836 1208L868 1115L864 1108ZM984 1035L1035 1066L932 1304L878 1275ZM1100 948L1168 990L1140 1062L1068 1022ZM1068 1028L1135 1062L1046 1260L982 1222ZM1164 1053L1240 1098L1190 1213L1115 1168ZM1180 985L1255 1020L1232 1080L1160 1042ZM1258 1005L1323 1020L1310 1070L1250 1048ZM1330 1010L1400 1040L1360 1110L1310 1070ZM1108 1188L1158 1218L1128 1290L1076 1258ZM1070 1278L1218 1330L1203 1397L1053 1345ZM1475 1020L1500 1030V1080L1460 1048Z"/>
          <path d="M1015 1575L1058 1585L1030 1717L985 1703ZM1060 1588L1095 1600L1075 1728L1034 1716ZM887 1710L978 1702L982 1810H890ZM762 1705L832 1685L857 1785L788 1810ZM853 2097L923 2075L940 2138L873 2162ZM871 2180L942 2155L964 2245L892 2266ZM910 2291L977 2266L992 2312L927 2342ZM285 1555H350L360 1662L295 1670ZM415 2235H530V2321L413 2320ZM338 2375L386 2380V2430H332ZM388 2368L480 2380L476 2412L515 2418V2430H386ZM1455 1543L1510 1585V1650L1450 1695L1390 1655ZM1285 1872L1345 1910L1300 2005L1235 1960ZM1330 1960L1380 1990L1340 2040L1300 2010ZM1438 1995L1488 2035L1445 2125L1390 2085ZM1470 1935L1510 1965V2010L1440 1985ZM1247 2058L1318 2110L1295 2152L1222 2107ZM1232 2125L1288 2158L1260 2215L1197 2175ZM1285 2160L1330 2280L1290 2330L1240 2270ZM1463 2290L1510 2320L1450 2420L1400 2370ZM1340 2370L1420 2430H1310ZM1340 2320L1365 2300 1380 2340 1360 2365Z"/>
          <path fill="#eef0ef" stroke="#e5e7e7" stroke-width="3" d="M600 530L652 528L655 600H604ZM594 629L672 625L676 724L601 727ZM602 752L677 748L680 845L607 849ZM730 480L797 475V530L733 532ZM730 562L827 554L831 646L737 652ZM738 652L817 652L815 694L740 692ZM740 698L823 696L825 742H740ZM737 745L827 742V786H740ZM726 800L830 792L833 868L730 874ZM792 880L834 878L838 970L797 973ZM760 1108L830 1105L834 1213L765 1216ZM768 1237L830 1234L833 1304L770 1306ZM905 1305L952 1316L933 1426L890 1413ZM958 1323L986 1333L964 1430L935 1418ZM992 1333L1036 1347L1012 1448L966 1433ZM1045 1348L1123 1370L1100 1474L1024 1453ZM857 1520L940 1516L944 1663L864 1666ZM1098 1583L1137 1588L1130 1658L1090 1655ZM1170 1538L1281 1583L1255 1670L1208 1648L1205 1640L1182 1632L1185 1620L1149 1605ZM1200 1658L1247 1678L1226 1740L1178 1720ZM912 1848L1088 1845V1898L914 1903ZM925 1905L1078 1900V1986L927 1993ZM965 2055L1076 2052V2125L967 2128ZM188 2412L307 2415V2430H186ZM1350 1790L1390 1775L1420 1800L1390 1860L1345 1860Z"/>
          <path fill="#fffbf1" stroke="#fde3a7" d="M220 2285L325 2280L327 2355L222 2360ZM1383 1197L1465 1245L1422 1340L1338 1283ZM1400 1140L1510 1220L1465 1245L1383 1190ZM1400 1945L1427 1975L1378 2068L1342 2050ZM50 380H150V410H50Z"/>
          <path fill="#fff5ef" stroke="#fdebe0" d="M870 1291L903 1305L884 1405L843 1390Z"/>
        </g>
        <g class="fill-[#d56e0c] text-[25.7px]" stroke="#fff" stroke-width="5" stroke-linejoin="round" paint-order="stroke">
          <text x="229" y="17.500" text-anchor="end">Bebek's Nyusu Yuukk..!!</text>
          <text x="49.500" y="38.500" text-anchor="end" class="text-[20.500px]">Cheese Tea</text>
          <text x="39.500" y="135.500" text-anchor="end">Sosbro</text>
          <text x="428.500" y="223.500">Eka olshop</text>
          <text x="-1" y="286" class="fill-[#546e7a]">mber Setia Baja, PT</text>
          <text x="60" y="408">Nasi Bebek</text><text x="60.500" y="434.500">Jawara Madura</text>
          <text x="281" y="505.500">Coco Pudding by Della</text>
          <text x="537" y="472">Million</text>
          <text x="525" y="542">Pinggir</text>
          <text x="57" y="650.500">Warteg Mustika Bahari</text>
        </g>
        <use href="#cafe" transform="translate(-3 105) scale(2)"/><use href="#food" transform="translate(511.500 284) scale(2)"/><use href="#food" transform="translate(37 436) scale(2)"/>
        <use href="#food" transform="translate(-1.500 547) scale(2)"/><use href="#food" transform="translate(497 565) scale(2)"/><use href="#food" transform="translate(33.500 666) scale(2)"/>
        <use href="#pin" x="273.500" y="369.800"/>
      </svg>
      <div class="absolute right-[24px] bottom-[24px] flex h-[58px] w-[58px] items-center justify-center rounded-md bg-white shadow-[0_1px_10px_rgba(0,0,0,0.25)]">
        <svg class="h-[33px] w-[33px]" viewBox="0 0 33 33" fill="none" stroke="#ee2020" stroke-width="3"><circle cx="16.500" cy="16.500" r="12"/><circle cx="16.500" cy="16.500" r="5.800" fill="#ee2020" stroke="none"/><path d="M16.500 0V5M16.500 28V33M0 16.500H5M28 16.500H33"/></svg>
      </div>
    </div>
    <section class="px-[24px] pt-[30px]">
      <h2 class="h-[40px] text-[29px] leading-[40px] font-bold tracking-[0.560px] text-[#757575]">Move the pin to your location</h2>
      <button class="mt-[23px] h-[71px] w-full rounded-[11px] bg-[#ea0000] text-[23px] font-black tracking-[0.900px] text-white">Set location</button>
    </section>
  </article>

  <!-- Flow arrows over the screens -->
  <svg class="pointer-events-none absolute inset-0 h-[1093px] w-[2560px]" viewBox="0 0 2560 1093" fill="#d0cb45">
    <g fill="none" stroke="#d0cb45" stroke-width="4.300"><path d="M598 836.700H643V547H662M911 653.700H1293M1849 326H1932"/></g>
    <path d="M660 534.700L681.500 547L660 559.300ZM1291.500 641.300L1313.500 653.700L1291.500 666.200ZM1931 313.700L1953 326.200L1931 338.700Z"/>
  </svg>
</main>
</body>
</html>
